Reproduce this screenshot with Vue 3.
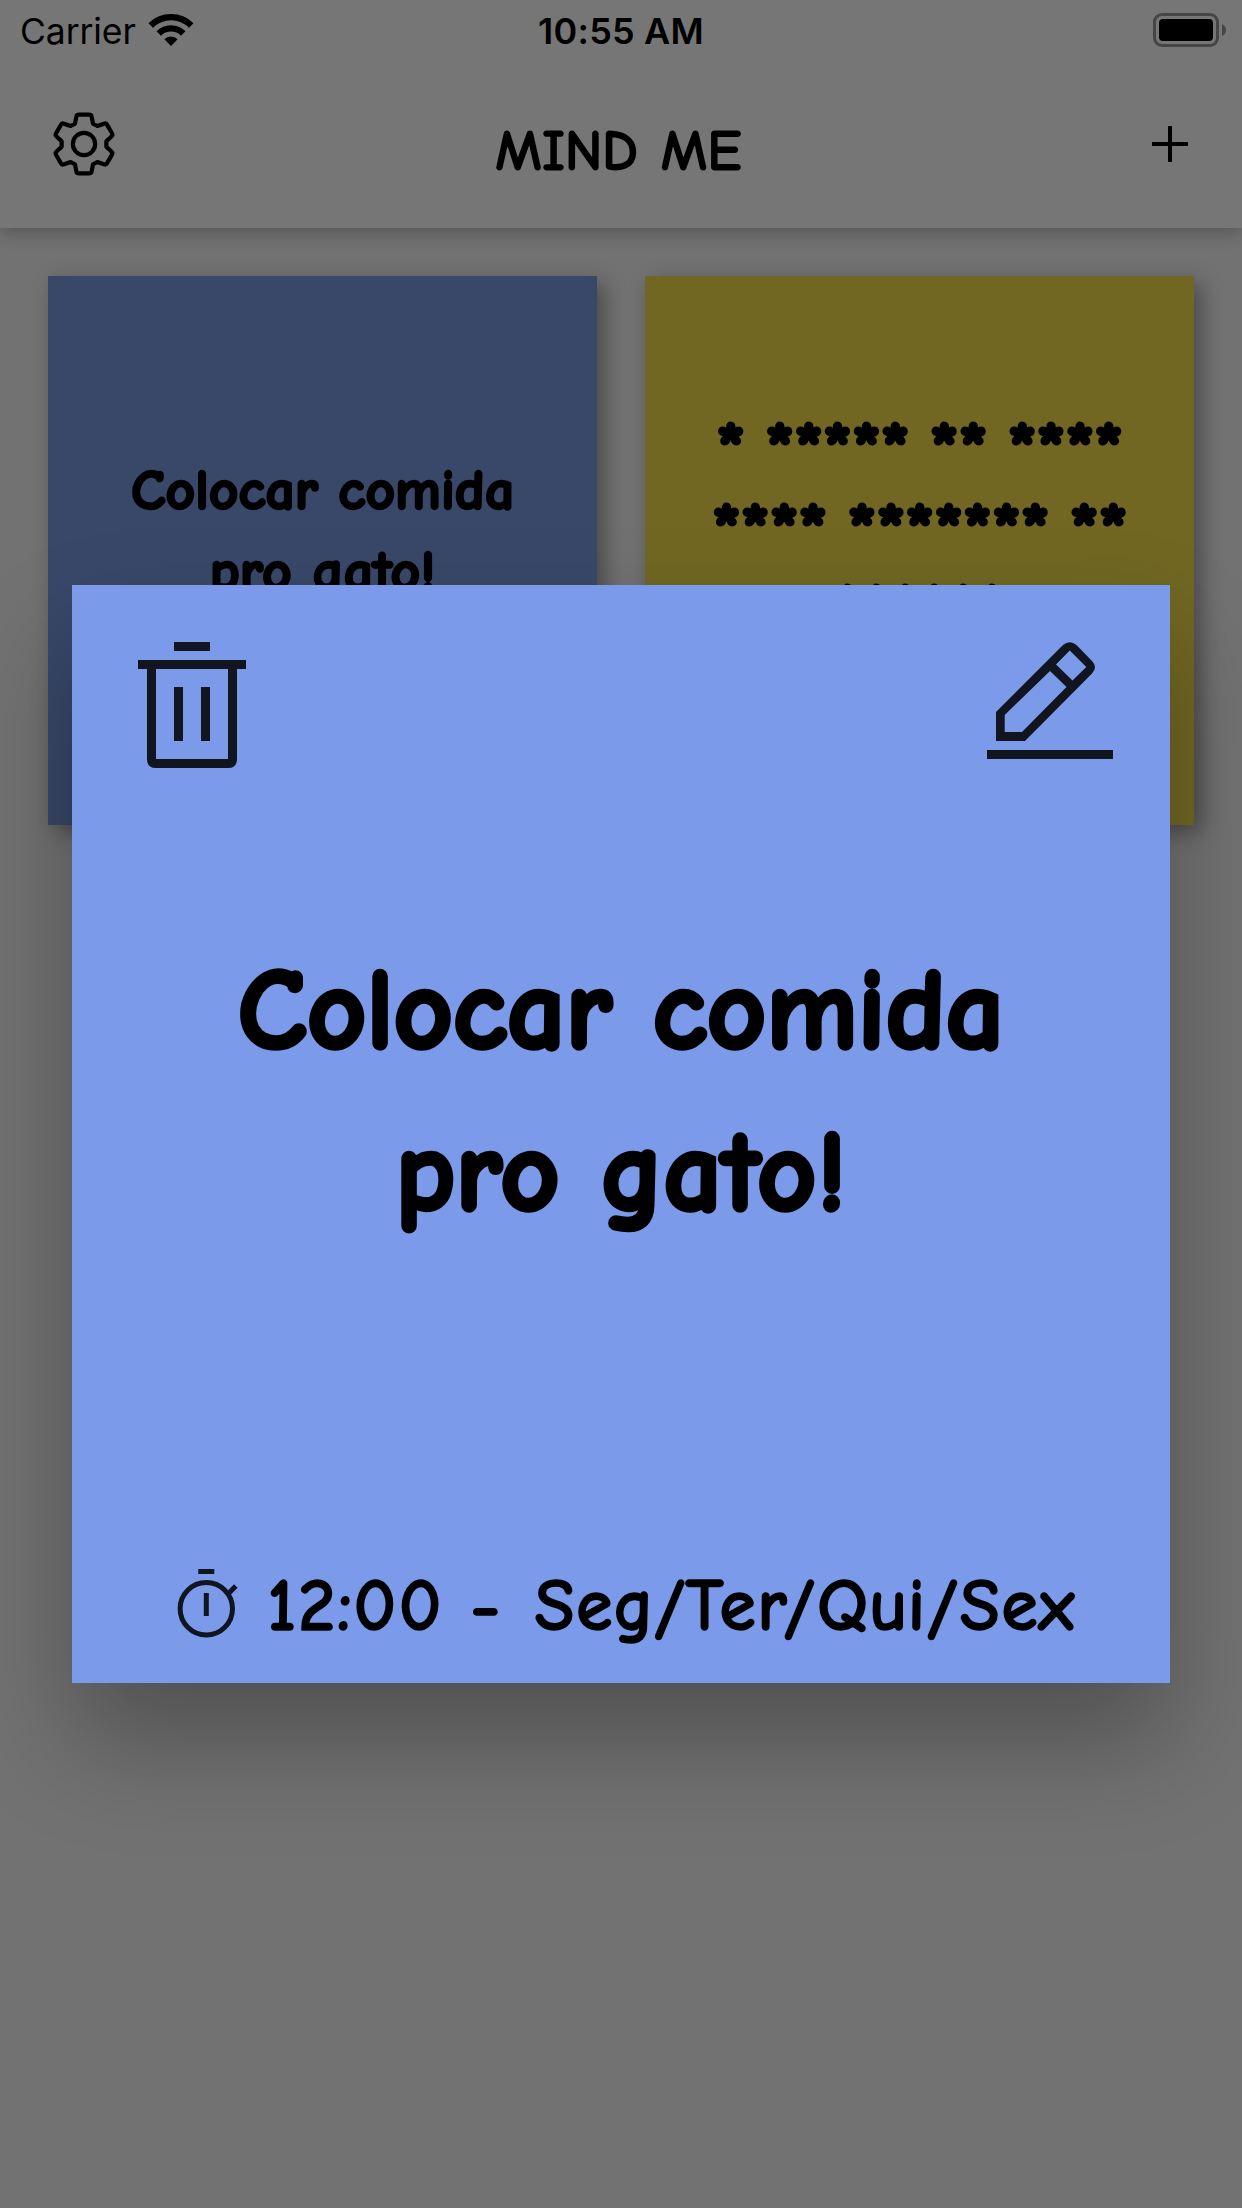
<script setup>
const note = ['Colocar comida', 'pro gato!']
const masked = ['* ***** ** ****', '**** ******* **', '******']
</script>

<template>
  <div class="screen">
    <header class="header">
      <div class="status">
        <div class="carrier">
          <span>Carrier</span>
          <svg width="46" height="34" viewBox="0 0 46 34">
            <path d="M0.5 10.2 A32 32 0 0 1 45.5 10.2 L41 14.7 A25.5 25.5 0 0 0 5 14.7 Z" />
            <path d="M8.5 18.2 A20.5 20.5 0 0 1 37.5 18.2 L33 22.7 A14.2 14.2 0 0 0 13 22.7 Z" />
            <path d="M16.4 26.2 A9.5 9.5 0 0 1 29.6 26.2 L23 33 Z" />
          </svg>
        </div>
        <span class="clock">10:55 AM</span>
        <svg class="battery" width="74" height="34" viewBox="0 0 74 34">
          <rect x="1.5" y="1.5" width="63" height="31" rx="7.5" fill="none" stroke="#454545" stroke-width="3" />
          <rect x="6" y="6" width="54" height="22" rx="4" />
          <path d="M69 11 Q73 13 73 17 Q73 21 69 23 Z" fill="#454545" />
        </svg>
      </div>
      <nav class="bar">
        <svg width="64" height="64" viewBox="-96 -96 192 192" fill="none" stroke="#000" stroke-width="12.5" stroke-linejoin="round">
          <path d="M-15 -88 L15 -88 Q22 -88 23 -82 L27 -61 L40 -54 L60 -61 Q66 -63 69 -58 L84 -32 Q87 -27 83 -23 L67 -8 L67 8 L83 23 Q87 27 84 32 L69 58 Q66 63 60 61 L40 54 L27 61 L23 82 Q22 88 15 88 L-15 88 Q-22 88 -23 82 L-27 61 L-40 54 L-60 61 Q-66 63 -69 58 L-84 32 Q-87 27 -83 23 L-67 8 L-67 -8 L-83 -23 Q-87 -27 -84 -32 L-69 -58 Q-66 -63 -60 -61 L-40 -54 L-27 -61 L-23 -82 Q-22 -88 -15 -88 Z" />
          <circle r="33.5" />
        </svg>
        <h1 class="title hand">MIND ME</h1>
        <svg width="36" height="36" viewBox="0 0 36 36" stroke="#000" stroke-width="4">
          <path d="M18 0 V36 M0 18 H36" />
        </svg>
      </nav>
    </header>

    <main class="grid">
      <article class="card blue">
        <p v-for="line in note" :key="line" class="hand">{{ line }}</p>
      </article>
      <article class="card yellow">
        <p v-for="line in masked" :key="line" class="hand">{{ line }}</p>
      </article>
    </main>

    <section class="modal">
      <div class="actions">
        <svg width="108" height="126" viewBox="0 0 108 126">
          <path fill-rule="evenodd" d="M36 0 H72 V9 H36 Z M0 18 H108 V27 H99 V117 Q99 126 90 126 H18 Q9 126 9 117 V27 H0 Z M18 27 V117 H90 V27 Z M36 45 H45 V99 H36 Z M63 45 H72 V99 H63 Z" />
        </svg>
        <svg width="126" height="117" viewBox="987 642 126 117">
          <path fill-rule="evenodd" d="M996 712 L1063 645 Q1069.7 639.5 1076.5 645 L1092 661 Q1098 667 1092 673.5 L1025 741 H996 Z M1069.7 650.5 L1086.3 667 L1072.5 680.5 L1056 664.5 Z M1050 671 L1066.5 687 L1022 732 H1004.7 V715Z M987 750 H1113 V759 H987 Z" />
        </svg>
      </div>
      <div class="message">
        <p v-for="line in note" :key="line" class="hand">{{ line }}</p>
      </div>
      <footer class="schedule">
        <svg width="62" height="70" viewBox="177 1567 62 70" fill="none" stroke="#10151f" stroke-width="5">
          <circle cx="206.3" cy="1607.8" r="26.2" />
          <path d="M198.3 1570.5 H214.3 M206.3 1592 V1615 M228.5 1592.5 L235.8 1585" />
        </svg>
        <span class="hand time">12:00</span>
        <span class="hand dash">-</span>
        <span class="hand days">Seg/Ter/Qui/Sex</span>
      </footer>
    </section>
  </div>
</template>

<style>
body {
  margin: 0;
  background: #727272;
}
</style>

<style scoped>
.screen {
  position: relative;
  width: 1242px;
  height: 2208px;
  overflow: hidden;
  background: #727272;
  color: #000;
  font-family: "Inter", sans-serif;
}
svg { display: block; flex: none; }
p, h1 { margin: 0; white-space: pre; }
.hand {
  font-family: "Comic Sans MS", "Chalkboard SE", "Comic Neue", "Inter", sans-serif;
}
.header {
  height: 228px;
  background: #767676;
  box-shadow: 0 6px 15px rgba(0, 0, 0, 0.22);
}
.status {
  display: grid;
  grid-template-columns: 1fr auto 1fr;
  height: 60px;
  padding: 0 15px;
}
.carrier {
  display: flex;
  gap: 12px;
  padding-left: 5px;
  font-size: 35.5px;
  line-height: 64px;
  letter-spacing: -0.1px;
}
.carrier svg { margin-top: 13px; }
.clock {
  font-size: 36px;
  line-height: 63px;
  font-weight: 600;
  letter-spacing: 0.2px;
}
.battery { justify-self: end; margin-top: 13px; }
.bar {
  display: flex;
  align-items: center;
  justify-content: space-between;
  height: 168px;
  padding: 0 54px 0 52px;
}
.title {
  font-size: 55px;
  line-height: 64px;
  font-weight: 400;
  letter-spacing: 1.1px;
  word-spacing: 3px;
  padding: 14px 30px 0 0;
  -webkit-text-stroke: 3px #000;
}
.grid {
  display: grid;
  grid-template-columns: 549px 549px;
  gap: 48px;
  padding: 48px;
}
.card {
  box-sizing: border-box;
  display: flex;
  flex-direction: column;
  align-items: center;
  justify-content: center;
  height: 549px;
  box-shadow: 7px 7px 20px rgba(0, 0, 0, 0.36);
  line-height: 81px;
  font-weight: 700;
}
.blue {
  background: #394869;
  padding-bottom: 39px;
  font-size: 57.5px;
  -webkit-text-stroke: 2.5px #000;
}
.yellow {
  background: #716723;
  padding-bottom: 39px;
  font-size: 77px;
  letter-spacing: -0.3px;
  word-spacing: -7px;
  -webkit-text-stroke: 3px #000;
}
.modal {
  position: absolute;
  left: 72px;
  top: 585px;
  width: 1098px;
  height: 1098px;
  display: flex;
  flex-direction: column;
  background: #7b9bea;
  box-shadow: 0 58px 100px rgba(0, 0, 0, 0.29);
}
.actions {
  display: flex;
  justify-content: space-between;
  padding: 57px 57px 0 66px;
  height: 126px;
  fill: #10151f;
}
.message {
  flex: 1;
  display: flex;
  flex-direction: column;
  align-items: center;
  padding-top: 162px;
  font-size: 115px;
  line-height: 162px;
  font-weight: 700;
  -webkit-text-stroke: 4.5px #000;
}
.schedule {
  display: flex;
  align-items: center;
  height: 100px;
  padding: 0 0 28px 105px;
  font-size: 70px;
  line-height: 80px;
  font-weight: 400;
  letter-spacing: 2.8px;
  -webkit-text-stroke: 3.5px #000;
}
.schedule svg { margin-bottom: 4px; }
.schedule .hand { padding-top: 4px; }
.time { margin-left: 29px; }
.dash { margin-left: 27px; }
.days { margin-left: 33px; }
</style>
